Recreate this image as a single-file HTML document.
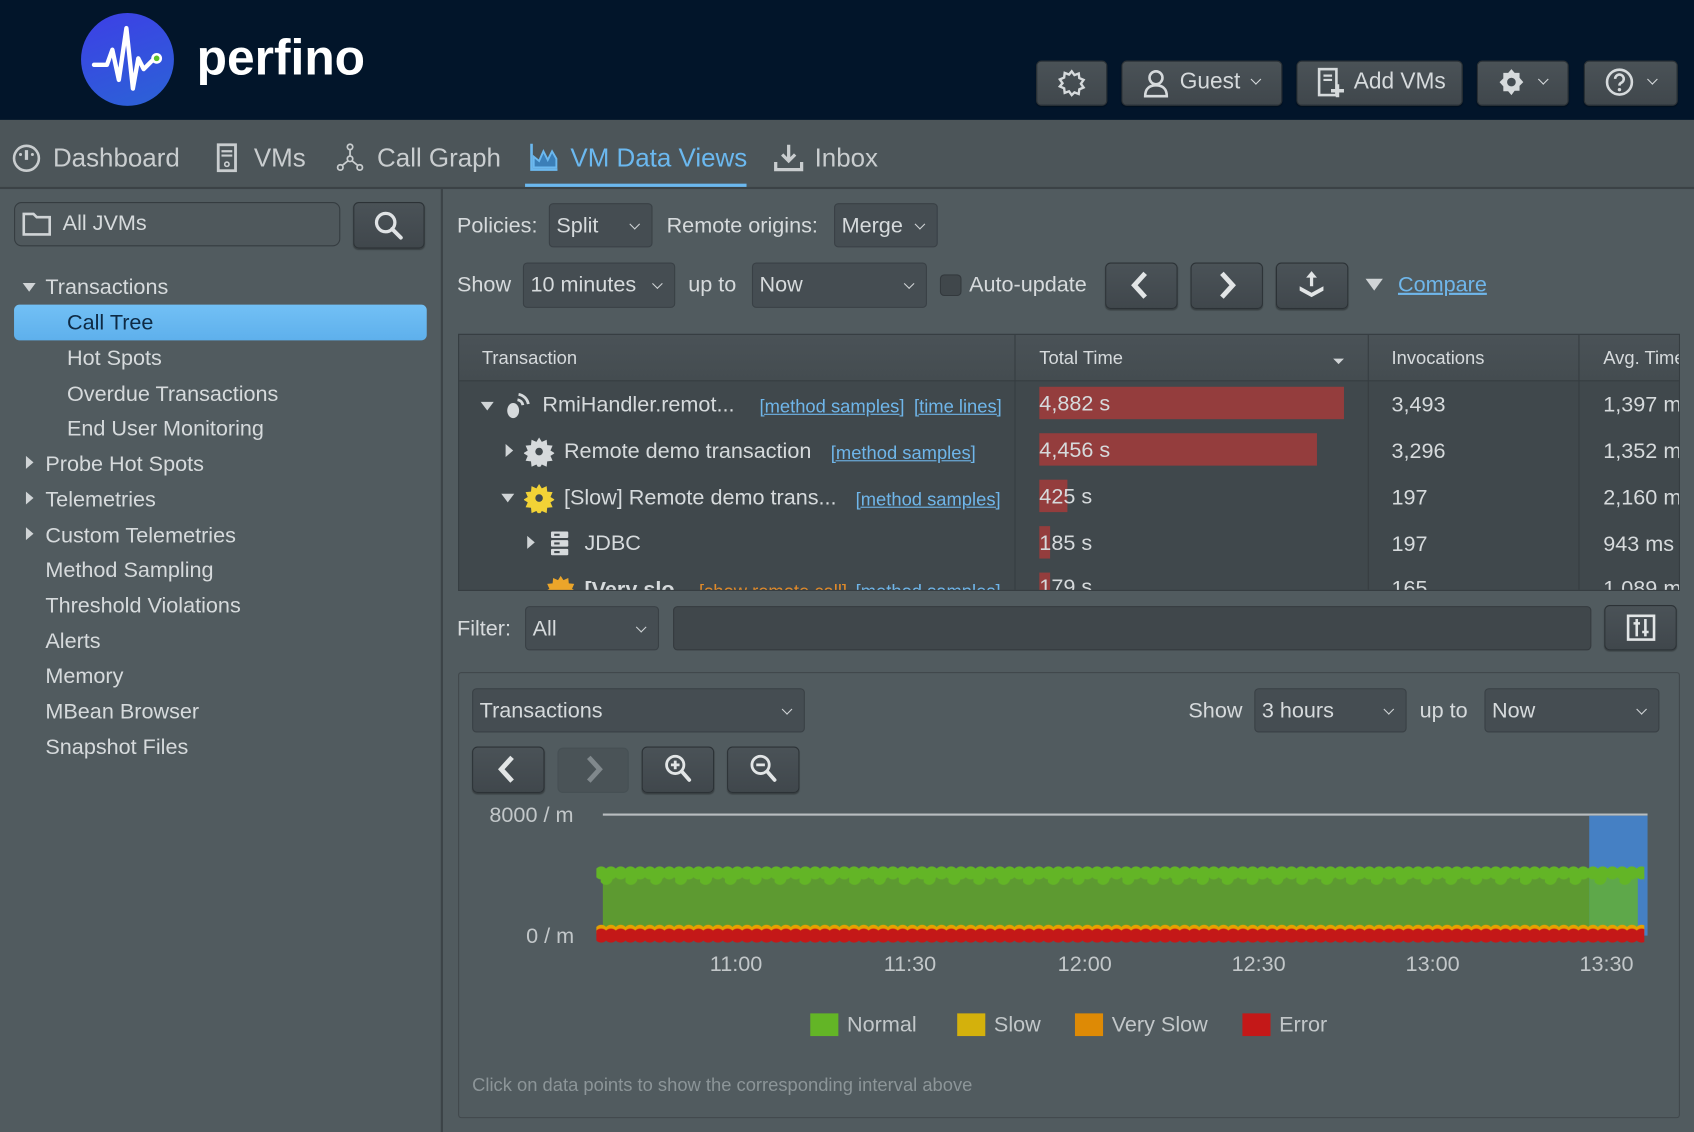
<!DOCTYPE html>
<html><head><meta charset="utf-8"><style>
*{box-sizing:border-box;margin:0;padding:0}
body{width:1694px;height:1132px;overflow:hidden;background:#515b5f;font-family:"Liberation Sans","DejaVu Sans",sans-serif;color:#d6dadc}
#w{position:absolute;left:0;top:0;width:1568px;height:1048px;transform:scale(1.08036);transform-origin:0 0;background:#515b5f}
.a{position:absolute}
.t{position:absolute;white-space:nowrap;font-size:20px;line-height:24px}
.btn{position:absolute;background:linear-gradient(#4a5257,#40474c);border:1px solid #2c3236;border-radius:5px;box-shadow:0 1px 1px rgba(0,0,0,.3)}
.sel{position:absolute;background:#454d52;border:1px solid #394045;border-radius:4px;font-size:20px;line-height:24px;padding-left:6px;display:flex;align-items:center;color:#d6dadc}
.sel:after{content:"";position:absolute;right:12px;top:50%;width:6px;height:6px;border-right:1.6px solid #cfd3d5;border-bottom:1.6px solid #cfd3d5;transform:translateY(-70%) rotate(45deg)}
.lnk{color:#6fb6ea;text-decoration:underline;font-size:17px}
.tri{position:absolute;width:0;height:0}
</style></head><body><div id="w">
<div class="a" style="left:0;top:0;width:1568px;height:111px;background:#02152a"></div>
<div class="a" style="left:75px;top:12px;width:86px;height:86px;border-radius:50%;background:linear-gradient(160deg,#3d3fe6,#2b63d6)"></div>
<svg class="a" style="left:75px;top:12px" width="86" height="86" viewBox="0 0 86 86"><path d="M12 48H24L29 34L35 62L42 14L48 70L53 42L58 52L66 44" fill="none" stroke="#fff" stroke-width="4" stroke-linejoin="round" stroke-linecap="round"/><circle cx="70" cy="42" r="5" fill="#fff"/><circle cx="70" cy="42" r="2.6" fill="#5ec22b"/></svg>
<div class="t" style="left:182px;top:26px;font-size:46px;line-height:54px;font-weight:bold;color:#fff">perfino</div>
<div class="btn" style="left:959px;top:56px;width:66px;height:42px"></div>
<svg class="a" style="left:978px;top:63px" width="28" height="28" viewBox="0 0 28 28"><path d="M14 3l2.5 3.5 4-1.5 .5 4.3 4 1.7-2.5 3.5 2.5 3.5-4 1.7-.5 4.3-4-1.5L14 25l-2.5-3.5-4 1.5-.5-4.3-4-1.7L5.5 14 3 10.5l4-1.7.5-4.3 4 1.5z" fill="none" stroke="#d6dadc" stroke-width="2.2"/></svg>
<div class="btn" style="left:1038px;top:56px;width:149px;height:42px"></div>
<svg class="a" style="left:1057px;top:63px" width="26" height="28" viewBox="0 0 26 28"><circle cx="13" cy="9" r="6" fill="none" stroke="#d6dadc" stroke-width="2.4"/><path d="M3 26c0-7 4-10 10-10s10 3 10 10z" fill="none" stroke="#d6dadc" stroke-width="2.4"/></svg>
<div class="t" style="left:1092px;top:64px;font-size:21px">Guest</div>
<div class="a" style="left:1159px;top:70px;width:7px;height:7px;border-right:1.5px solid #d6dadc;border-bottom:1.5px solid #d6dadc;transform:rotate(45deg)"></div>
<div class="btn" style="left:1200px;top:56px;width:154px;height:42px"></div>
<svg class="a" style="left:1219px;top:62px" width="26" height="30" viewBox="0 0 26 30"><rect x="2" y="2" width="16" height="24" fill="none" stroke="#d6dadc" stroke-width="2.4"/><path d="M6 8h8M6 12h8" stroke="#d6dadc" stroke-width="2"/><path d="M19 16v12M13 22h12" stroke="#d6dadc" stroke-width="3.2"/></svg>
<div class="t" style="left:1253px;top:64px;font-size:21px">Add VMs</div>
<div class="btn" style="left:1367px;top:56px;width:85px;height:42px"></div>
<svg class="a" style="left:1385px;top:62px" width="28" height="28" viewBox="0 0 28 28"><path d="M14 2l3 3.5h4.5v4.5L25 14l-3.5 3.5v4.5H17L14 26l-3-3.5H6.5V18L3 14l3.5-3.5V5.5H11z" fill="#d6dadc"/><circle cx="14" cy="14" r="4" fill="#444c52"/></svg>
<div class="a" style="left:1425px;top:70px;width:7px;height:7px;border-right:1.5px solid #d6dadc;border-bottom:1.5px solid #d6dadc;transform:rotate(45deg)"></div>
<div class="btn" style="left:1466px;top:56px;width:87px;height:42px"></div>
<svg class="a" style="left:1485px;top:62px" width="28" height="28" viewBox="0 0 28 28"><circle cx="14" cy="14" r="11.5" fill="none" stroke="#d6dadc" stroke-width="2.4"/><path d="M10 11a4 4 0 1 1 5.5 3.7c-1 .5-1.5 1.2-1.5 2.5" fill="none" stroke="#d6dadc" stroke-width="2.4"/><circle cx="14" cy="21" r="1.6" fill="#d6dadc"/></svg>
<div class="a" style="left:1526px;top:70px;width:7px;height:7px;border-right:1.5px solid #d6dadc;border-bottom:1.5px solid #d6dadc;transform:rotate(45deg)"></div>
<div class="a" style="left:0;top:111px;width:1568px;height:63px;background:#4c5559"></div>
<div class="a" style="left:0;top:173px;width:1568px;height:2px;background:#3b4246"></div>
<svg class="a" style="left:11px;top:133px" width="27" height="27" viewBox="0 0 27 27"><circle cx="13.5" cy="13.5" r="11.5" fill="none" stroke="#c9cdcf" stroke-width="2.4"/><path d="M13.5 6v9" stroke="#c9cdcf" stroke-width="3"/><circle cx="8" cy="10" r="1.4" fill="#c9cdcf"/><circle cx="19" cy="10" r="1.4" fill="#c9cdcf"/></svg>
<div class="t" style="left:49px;top:133px;font-size:24px;line-height:28px;color:#c9cdcf">Dashboard</div>
<svg class="a" style="left:200px;top:132px" width="22" height="28" viewBox="0 0 22 28"><rect x="2" y="2" width="16" height="24" fill="none" stroke="#c9cdcf" stroke-width="2.6"/><path d="M5 8h10M5 12h10" stroke="#c9cdcf" stroke-width="2"/><circle cx="10" cy="20" r="2" fill="none" stroke="#c9cdcf" stroke-width="1.5"/></svg>
<div class="t" style="left:235px;top:133px;font-size:24px;line-height:28px;color:#c9cdcf">VMs</div>
<svg class="a" style="left:311px;top:132px" width="26" height="28" viewBox="0 0 26 28"><circle cx="13" cy="4" r="2.5" fill="none" stroke="#c9cdcf" stroke-width="1.6"/><circle cx="4" cy="23" r="2.5" fill="none" stroke="#c9cdcf" stroke-width="1.6"/><circle cx="22" cy="23" r="2.5" fill="none" stroke="#c9cdcf" stroke-width="1.6"/><circle cx="13" cy="15" r="2.5" fill="none" stroke="#c9cdcf" stroke-width="1.6"/><path d="M13 7v6M11 17l-5 4M15 17l5 4" stroke="#c9cdcf" stroke-width="1.6"/></svg>
<div class="t" style="left:349px;top:133px;font-size:24px;line-height:28px;color:#c9cdcf">Call Graph</div>
<svg class="a" style="left:490px;top:131px" width="28" height="28" viewBox="0 0 28 28"><path d="M2 2v24h24" fill="none" stroke="#6bb8ef" stroke-width="2.4"/><path d="M4 24V14l5 4 4-9 4 8 4-8 4 7v8z" fill="#3b7fb8" stroke="#6bb8ef" stroke-width="1.8"/></svg>
<div class="t" style="left:528px;top:133px;font-size:24px;line-height:28px;color:#6bb8ef">VM Data Views</div>
<div class="a" style="left:486px;top:170px;width:205px;height:3px;background:#6bb8ef"></div>
<svg class="a" style="left:716px;top:132px" width="28" height="28" viewBox="0 0 28 28"><path d="M14 2v15M8 11l6 6 6-6" fill="none" stroke="#c9cdcf" stroke-width="3"/><path d="M2 18v7h24v-7" fill="none" stroke="#c9cdcf" stroke-width="3"/></svg>
<div class="t" style="left:754px;top:133px;font-size:24px;line-height:28px;color:#c9cdcf">Inbox</div>
<div class="a" style="left:408px;top:175px;width:2px;height:873px;background:#3c4347"></div>
<div class="a" style="left:13px;top:187px;width:302px;height:41px;border:1px solid #353c40;border-radius:7px;background:#4f585c"></div>
<svg class="a" style="left:20px;top:195px" width="28" height="24" viewBox="0 0 28 24"><path d="M2 3h9l3 3h12v16H2z" fill="none" stroke="#d0d4d6" stroke-width="2.4"/></svg>
<div class="t" style="left:58px;top:195px;font-size:20px">All JVMs</div>
<div class="btn" style="left:327px;top:187px;width:66px;height:43px"></div>
<svg class="a" style="left:345px;top:194px" width="30" height="30" viewBox="0 0 30 30"><circle cx="12" cy="12" r="8.5" fill="none" stroke="#e0e3e5" stroke-width="3"/><path d="M18 18l8 8" stroke="#e0e3e5" stroke-width="3.6" stroke-linecap="round"/></svg>
<div class="tri" style="left:21px;top:262px;border-left:6px solid transparent;border-right:6px solid transparent;border-top:8px solid #d0d4d6"></div>
<div class="t" style="left:42px;top:254px">Transactions</div>
<div class="a" style="left:13px;top:282px;width:382px;height:33px;border-radius:5px;background:linear-gradient(#72c0f5,#5eb0ec)"></div>
<div class="t" style="left:62px;top:287px;color:#0e2a44">Call Tree</div>
<div class="t" style="left:62px;top:320px">Hot Spots</div>
<div class="t" style="left:62px;top:353px">Overdue Transactions</div>
<div class="t" style="left:62px;top:385px">End User Monitoring</div>
<div class="tri" style="left:24px;top:422px;border-top:6px solid transparent;border-bottom:6px solid transparent;border-left:7px solid #d0d4d6"></div>
<div class="t" style="left:42px;top:418px">Probe Hot Spots</div>
<div class="tri" style="left:24px;top:455px;border-top:6px solid transparent;border-bottom:6px solid transparent;border-left:7px solid #d0d4d6"></div>
<div class="t" style="left:42px;top:451px">Telemetries</div>
<div class="tri" style="left:24px;top:488px;border-top:6px solid transparent;border-bottom:6px solid transparent;border-left:7px solid #d0d4d6"></div>
<div class="t" style="left:42px;top:484px">Custom Telemetries</div>
<div class="t" style="left:42px;top:516px">Method Sampling</div>
<div class="t" style="left:42px;top:549px">Threshold Violations</div>
<div class="t" style="left:42px;top:582px">Alerts</div>
<div class="t" style="left:42px;top:614px">Memory</div>
<div class="t" style="left:42px;top:647px">MBean Browser</div>
<div class="t" style="left:42px;top:680px">Snapshot Files</div>
<div class="t" style="left:423px;top:197px">Policies:</div>
<div class="sel" style="left:508px;top:188px;width:96px;height:41px">Split</div>
<div class="t" style="left:617px;top:197px">Remote origins:</div>
<div class="sel" style="left:772px;top:188px;width:96px;height:41px">Merge</div>
<div class="t" style="left:423px;top:252px">Show</div>
<div class="sel" style="left:484px;top:243px;width:141px;height:42px">10 minutes</div>
<div class="t" style="left:637px;top:252px">up to</div>
<div class="sel" style="left:696px;top:243px;width:162px;height:42px">Now</div>
<div class="a" style="left:870px;top:254px;width:20px;height:20px;border-radius:4px;background:#40474b;border:1px solid #33393d"></div>
<div class="t" style="left:897px;top:252px">Auto-update</div>
<div class="btn" style="left:1023px;top:243px;width:67px;height:43px"></div>
<svg class="a" style="left:1043px;top:250px" width="26" height="28" viewBox="0 0 26 28"><path d="M17 3L7 14l10 11" fill="none" stroke="#e2e5e6" stroke-width="4.5"/></svg>
<div class="btn" style="left:1102px;top:243px;width:67px;height:43px"></div>
<svg class="a" style="left:1122px;top:250px" width="26" height="28" viewBox="0 0 26 28"><path d="M9 3l10 11L9 25" fill="none" stroke="#e2e5e6" stroke-width="4.5"/></svg>
<div class="btn" style="left:1181px;top:243px;width:67px;height:43px"></div>
<svg class="a" style="left:1200px;top:249px" width="28" height="30" viewBox="0 0 28 30"><path d="M14 2l-5 6h3.5v8h3V8H19z" fill="#e2e5e6"/><path d="M3 16l11 6 11-6v4l-11 6-11-6z" fill="#e2e5e6"/></svg>
<div class="tri" style="left:1264px;top:258px;border-left:8px solid transparent;border-right:8px solid transparent;border-top:11px solid #d0d4d6"></div>
<div class="t lnk" style="left:1294px;top:252px;font-size:20px">Compare</div>
<div class="a" style="left:424px;top:309px;width:1131px;height:238px;background:#40484c;border:1px solid #363d41;overflow:hidden">
 <div class="a" style="left:0;top:0;width:1144px;height:43px;background:linear-gradient(#4a5257,#444c50);border-bottom:1px solid #363d41"></div>
 <div class="a" style="left:514px;top:0;width:1px;height:238px;background:#363d41"></div>
 <div class="a" style="left:841px;top:0;width:1px;height:238px;background:#363d41"></div>
 <div class="a" style="left:1036px;top:0;width:1px;height:238px;background:#363d41"></div>
 <div class="t" style="left:21px;top:10px;font-size:17px">Transaction</div>
 <div class="t" style="left:537px;top:10px;font-size:17px">Total Time</div>
 <div class="tri" style="left:809px;top:22px;border-left:5px solid transparent;border-right:5px solid transparent;border-top:5px solid #d0d4d6"></div>
 <div class="t" style="left:863px;top:10px;font-size:17px">Invocations</div>
 <div class="t" style="left:1059px;top:10px;font-size:17px">Avg. Time</div>
 <div class="tri" style="left:20px;top:62px;border-left:6px solid transparent;border-right:6px solid transparent;border-top:8px solid #d0d4d6"></div>
 <svg class="a" style="left:42px;top:51px" width="26" height="28" viewBox="0 0 26 28"><ellipse cx="8" cy="19" rx="5.5" ry="7" fill="#d6dadc"/><path d="M12 9a6 6 0 0 1 5 5M13 4a11 11 0 0 1 9 9" fill="none" stroke="#d6dadc" stroke-width="2.6"/></svg>
 <div class="t" style="left:77px;top:53px">RmiHandler.remot...</div>
 <div class="t lnk" style="left:278px;top:55px">[method samples]</div><div class="t lnk" style="left:421px;top:55px">[time lines]</div>
 <div class="a" style="left:537px;top:48px;width:282px;height:30px;background:#943d3d"></div>
 <div class="t" style="left:537px;top:52px">4,882 s</div>
 <div class="t" style="left:863px;top:53px">3,493</div><div class="t" style="left:1059px;top:53px">1,397 ms</div>
 <div class="tri" style="left:43px;top:101px;border-top:6px solid transparent;border-bottom:6px solid transparent;border-left:7px solid #d0d4d6"></div>
 <svg class="a" style="left:60px;top:94px" width="28" height="28" viewBox="0 0 28 28"><path d="M14 1l2.5 4 4.5-2 .5 5 5 .5-2 4.5 4 2.5-4 2.5 2 4.5-5 .5-.5 5-4.5-2-2.5 4-2.5-4-4.5 2-.5-5-5-.5 2-4.5-4-2.5 4-2.5-2-4.5 5-.5.5-5 4.5 2z" fill="#d6dadc"/><circle cx="14" cy="14" r="3.5" fill="#40484c"/></svg>
 <div class="t" style="left:97px;top:96px">Remote demo transaction</div>
 <div class="t lnk" style="left:344px;top:98px">[method samples]</div>
 <div class="a" style="left:537px;top:91px;width:257px;height:30px;background:#943d3d"></div>
 <div class="t" style="left:537px;top:95px">4,456 s</div>
 <div class="t" style="left:863px;top:96px">3,296</div><div class="t" style="left:1059px;top:96px">1,352 ms</div>
 <div class="tri" style="left:39px;top:147px;border-left:6px solid transparent;border-right:6px solid transparent;border-top:8px solid #d0d4d6"></div>
 <svg class="a" style="left:60px;top:137px" width="28" height="28" viewBox="0 0 28 28"><path d="M14 1l2.5 4 4.5-2 .5 5 5 .5-2 4.5 4 2.5-4 2.5 2 4.5-5 .5-.5 5-4.5-2-2.5 4-2.5-4-4.5 2-.5-5-5-.5 2-4.5-4-2.5 4-2.5-2-4.5 5-.5.5-5 4.5 2z" fill="#f2d236"/><circle cx="14" cy="14" r="3.5" fill="#40484c"/></svg>
 <div class="t" style="left:97px;top:139px">[Slow] Remote demo trans...</div>
 <div class="t lnk" style="left:367px;top:141px">[method samples]</div>
 <div class="a" style="left:537px;top:134px;width:26px;height:30px;background:#943d3d"></div>
 <div class="t" style="left:537px;top:138px">425 s</div>
 <div class="t" style="left:863px;top:139px">197</div><div class="t" style="left:1059px;top:139px">2,160 ms</div>
 <div class="tri" style="left:63px;top:186px;border-top:6px solid transparent;border-bottom:6px solid transparent;border-left:7px solid #d0d4d6"></div>
 <svg class="a" style="left:84px;top:181px" width="18" height="24" viewBox="0 0 18 24"><rect x="1" y="1" width="16" height="6" rx="1" fill="#d6dadc"/><rect x="1" y="9" width="16" height="6" rx="1" fill="#d6dadc"/><rect x="1" y="17" width="16" height="6" rx="1" fill="#d6dadc"/><path d="M4 4h5M4 12h5M4 20h5" stroke="#40484c" stroke-width="2"/></svg>
 <div class="t" style="left:116px;top:181px">JDBC</div>
 <div class="a" style="left:537px;top:177px;width:10px;height:30px;background:#943d3d"></div>
 <div class="t" style="left:537px;top:181px">185 s</div>
 <div class="t" style="left:863px;top:182px">197</div><div class="t" style="left:1059px;top:182px">943 ms</div>
 <svg class="a" style="left:80px;top:222px" width="28" height="28" viewBox="0 0 28 28"><path d="M14 1l2.5 4 4.5-2 .5 5 5 .5-2 4.5 4 2.5-4 2.5 2 4.5-5 .5-.5 5-4.5-2-2.5 4-2.5-4-4.5 2-.5-5-5-.5 2-4.5-4-2.5 4-2.5-2-4.5 5-.5.5-5 4.5 2z" fill="#eba52a"/></svg>
 <div class="t" style="left:116px;top:224px;font-weight:bold">[Very slo</div>
 <div class="t" style="left:222px;top:226px;font-size:17px;color:#e08a2a;text-decoration:underline">[show remote call]</div><div class="t lnk" style="left:367px;top:226px">[method samples]</div>
 <div class="a" style="left:537px;top:220px;width:10px;height:30px;background:#943d3d"></div>
 <div class="t" style="left:537px;top:222px">179 s</div>
 <div class="t" style="left:863px;top:223px">165</div><div class="t" style="left:1059px;top:223px">1,089 ms</div>
</div>
<div class="t" style="left:423px;top:570px">Filter:</div>
<div class="sel" style="left:486px;top:561px;width:124px;height:41px">All</div>
<div class="a" style="left:623px;top:561px;width:850px;height:41px;background:#40474b;border:1px solid #343a3e;border-radius:4px"></div>
<div class="btn" style="left:1485px;top:560px;width:67px;height:42px"></div>
<svg class="a" style="left:1505px;top:568px" width="28" height="26" viewBox="0 0 28 26"><rect x="2" y="2" width="24" height="22" fill="none" stroke="#e2e5e6" stroke-width="2.4"/><path d="M10 5v16M18 5v16M7 9h6M15 17h6" stroke="#e2e5e6" stroke-width="2.4"/></svg>
<div class="a" style="left:424px;top:622px;width:1131px;height:413px;border:1px solid #41484c;border-radius:3px"></div>
<div class="sel" style="left:437px;top:637px;width:308px;height:41px">Transactions</div>
<div class="t" style="left:1100px;top:646px">Show</div>
<div class="sel" style="left:1161px;top:637px;width:141px;height:41px">3 hours</div>
<div class="t" style="left:1314px;top:646px">up to</div>
<div class="sel" style="left:1374px;top:637px;width:162px;height:41px">Now</div>
<div class="btn" style="left:437px;top:691px;width:67px;height:43px"></div>
<svg class="a" style="left:457px;top:698px" width="26" height="28" viewBox="0 0 26 28"><path d="M17 3L7 14l10 11" fill="none" stroke="#e2e5e6" stroke-width="4.5"/></svg>
<div class="a" style="left:516px;top:692px;width:66px;height:42px;background:#4a5357;border:1px solid #465054;border-radius:5px"></div>
<svg class="a" style="left:536px;top:698px" width="26" height="28" viewBox="0 0 26 28"><path d="M9 3l10 11L9 25" fill="none" stroke="#80888c" stroke-width="4.5"/></svg>
<div class="btn" style="left:594px;top:691px;width:67px;height:43px"></div>
<svg class="a" style="left:613px;top:697px" width="30" height="30" viewBox="0 0 30 30"><circle cx="12" cy="11" r="8" fill="none" stroke="#e2e5e6" stroke-width="2.6"/><path d="M8 11h8M12 7v8" stroke="#e2e5e6" stroke-width="2.6"/><path d="M18 17l7 8" stroke="#e2e5e6" stroke-width="3.4" stroke-linecap="round"/></svg>
<div class="btn" style="left:673px;top:691px;width:67px;height:43px"></div>
<svg class="a" style="left:692px;top:697px" width="30" height="30" viewBox="0 0 30 30"><circle cx="12" cy="11" r="8" fill="none" stroke="#e2e5e6" stroke-width="2.6"/><path d="M8 11h8" stroke="#e2e5e6" stroke-width="2.6"/><path d="M18 17l7 8" stroke="#e2e5e6" stroke-width="3.4" stroke-linecap="round"/></svg>
<div class="t" style="left:453px;top:743px;color:#c2c7c9">8000 / m</div>
<div class="t" style="left:487px;top:855px;color:#c2c7c9">0 / m</div>
<svg class="a" style="left:540px;top:740px" width="1000" height="140" viewBox="540 740 1000 140">
<defs>
<pattern id="g" x="552" y="798" width="9" height="20" patternUnits="userSpaceOnUse"><circle cx="4.5" cy="10" r="6" fill="#63b526"/></pattern>
<pattern id="g2" x="556" y="803" width="23" height="20" patternUnits="userSpaceOnUse"><circle cx="5" cy="10" r="6" fill="#63b526"/></pattern>
<pattern id="o" x="552" y="852" width="9" height="20" patternUnits="userSpaceOnUse"><circle cx="4.5" cy="10" r="6" fill="#e6a000"/></pattern>
<pattern id="r" x="552" y="856" width="9" height="20" patternUnits="userSpaceOnUse"><circle cx="4.5" cy="10" r="6.5" fill="#c41818"/></pattern>
</defs>
<rect x="558" y="753" width="967" height="2" fill="#b8bdbf"/>
<rect x="1471" y="755" width="54" height="111" fill="#4580c4"/>
<rect x="558" y="810" width="913" height="52" fill="#5d9a31"/>
<rect x="1471" y="810" width="45" height="52" fill="#5ea84a"/>
<rect x="552" y="800" width="970" height="20" fill="url(#g)"/>
<rect x="552" y="805" width="970" height="20" fill="url(#g2)"/>
<rect x="552" y="852" width="970" height="12" fill="url(#o)"/>
<rect x="552" y="858" width="970" height="18" fill="url(#r)"/>
</svg>
<div class="t" style="left:657px;top:881px;color:#c2c7c9">11:00</div>
<div class="t" style="left:818px;top:881px;color:#c2c7c9">11:30</div>
<div class="t" style="left:979px;top:881px;color:#c2c7c9">12:00</div>
<div class="t" style="left:1140px;top:881px;color:#c2c7c9">12:30</div>
<div class="t" style="left:1301px;top:881px;color:#c2c7c9">13:00</div>
<div class="t" style="left:1462px;top:881px;color:#c2c7c9">13:30</div>
<div class="a" style="left:750px;top:938px;width:26px;height:21px;background:#63b526"></div><div class="t" style="left:784px;top:937px;color:#c2c7c9">Normal</div>
<div class="a" style="left:886px;top:938px;width:26px;height:21px;background:#d4b10c"></div><div class="t" style="left:920px;top:937px;color:#c2c7c9">Slow</div>
<div class="a" style="left:995px;top:938px;width:26px;height:21px;background:#de8a05"></div><div class="t" style="left:1029px;top:937px;color:#c2c7c9">Very Slow</div>
<div class="a" style="left:1150px;top:938px;width:26px;height:21px;background:#c41818"></div><div class="t" style="left:1184px;top:937px;color:#c2c7c9">Error</div>
<div class="t" style="left:437px;top:993px;font-size:17px;color:#8c9598">Click on data points to show the corresponding interval above</div>
</div></body></html>
